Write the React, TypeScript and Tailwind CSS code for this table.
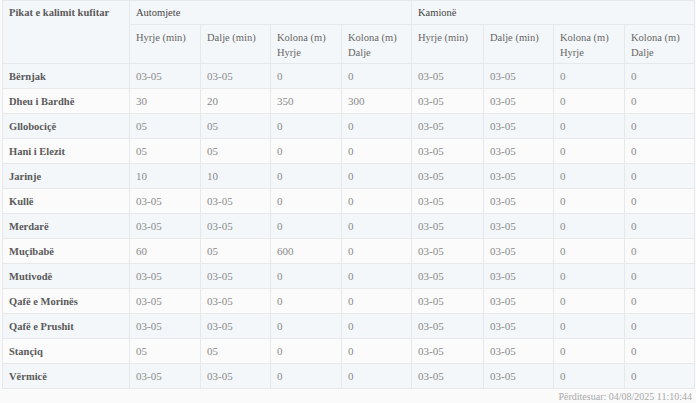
import React from "react";

const rows: [string, string, string, string, string, string, string, string, string][] = [
  ["Bërnjak", "03-05", "03-05", "0", "0", "03-05", "03-05", "0", "0"],
  ["Dheu i Bardhë", "30", "20", "350", "300", "03-05", "03-05", "0", "0"],
  ["Gllobociçë", "05", "05", "0", "0", "03-05", "03-05", "0", "0"],
  ["Hani i Elezit", "05", "05", "0", "0", "03-05", "03-05", "0", "0"],
  ["Jarinje", "10", "10", "0", "0", "03-05", "03-05", "0", "0"],
  ["Kullë", "03-05", "03-05", "0", "0", "03-05", "03-05", "0", "0"],
  ["Merdarë", "03-05", "03-05", "0", "0", "03-05", "03-05", "0", "0"],
  ["Muçibabë", "60", "05", "600", "0", "03-05", "03-05", "0", "0"],
  ["Mutivodë", "03-05", "03-05", "0", "0", "03-05", "03-05", "0", "0"],
  ["Qafë e Morinës", "03-05", "03-05", "0", "0", "03-05", "03-05", "0", "0"],
  ["Qafë e Prushit", "03-05", "03-05", "0", "0", "03-05", "03-05", "0", "0"],
  ["Stançiq", "05", "05", "0", "0", "03-05", "03-05", "0", "0"],
  ["Vërmicë", "03-05", "03-05", "0", "0", "03-05", "03-05", "0", "0"],
];

const sub = ["Hyrje (min)", "Dalje (min)", "Kolona (m) Hyrje", "Kolona (m) Dalje"];

export default function App() {
  const font = { fontFamily: '"Liberation Serif", "DejaVu Serif", serif' };
  return (
    <div className="w-[696px] h-[403px] bg-[#fafafa] pl-[2px] pr-[2px]" style={font}>
      <table className="table-fixed border-collapse w-[692px] text-[10.5px] leading-[15px]">
        <colgroup>
          <col className="w-[127px]" />
          <col className="w-[71px]" />
          <col className="w-[70px]" />
          <col className="w-[71px]" />
          <col className="w-[70px]" />
          <col className="w-[72px]" />
          <col className="w-[70px]" />
          <col className="w-[71px]" />
          <col className="w-[70px]" />
        </colgroup>
        <thead>
          <tr className="h-[24px] bg-[#f4f7f9]">
            <th rowSpan={2} className="border border-[#e6e8ea] align-top text-left font-bold text-[#5a5a5a] px-[6px] pt-[4px]">
              Pikat e kalimit kufitar
            </th>
            <th colSpan={4} className="border border-[#e6e8ea] text-left font-normal text-[#444] px-[6px]">
              Automjete
            </th>
            <th colSpan={4} className="border border-[#e6e8ea] text-left font-normal text-[#444] px-[6px]">
              Kamionë
            </th>
          </tr>
          <tr className="h-[39px] bg-[#f4f7f9]">
            {[...sub, ...sub].map((s, i) => (
              <th key={i} className="border border-[#e6e8ea] align-top text-left font-normal text-[#666] px-[6px] pt-[5px]">
                {s}
              </th>
            ))}
          </tr>
        </thead>
        <tbody>
          {rows.map((r, ri) => (
            <tr key={ri} className={`h-[25px] ${ri % 2 === 0 ? "bg-[#f3f7f9]" : "bg-[#fbfbfb]"}`}>
              {r.map((c, ci) => (
                <td
                  key={ci}
                  className={`border border-[#e6e8ea] px-[6px] ${ci === 0 ? "font-bold text-[#5a5a5a]" : "text-[#8a8a8a] text-[11px]"}`}
                >
                  {c}
                </td>
              ))}
            </tr>
          ))}
        </tbody>
      </table>
      <div className="text-right text-[10px] leading-[12px] text-[#a8a8a8] pt-[2px] pr-[2px]">
        Përditesuar: 04/08/2025 11:10:44
      </div>
    </div>
  );
}
